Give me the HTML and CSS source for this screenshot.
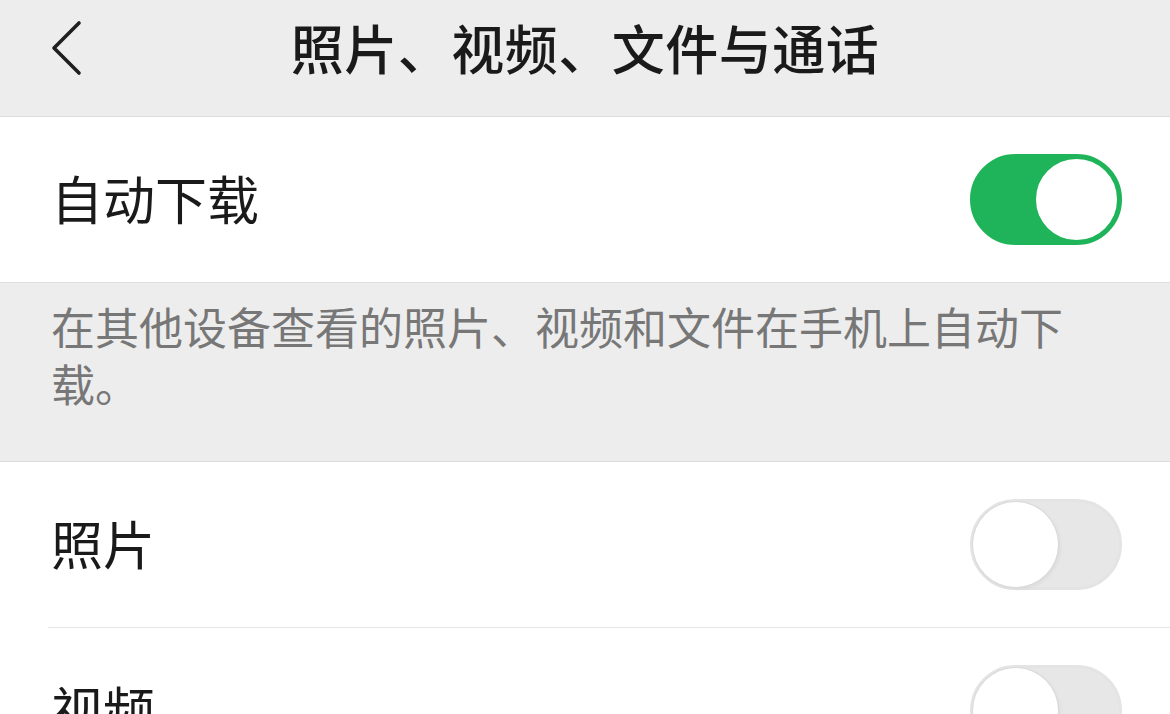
FILE: index.html
```html
<!DOCTYPE html>
<html lang="zh-CN">
<head>
<meta charset="utf-8">
<title>照片、视频、文件与通话</title>
<link rel="stylesheet" href="styles.css">
</head>
<body>
<header class="nav">
  <div class="nav-left">
    <svg class="back" width="34" height="56" viewBox="0 0 34 56" aria-hidden="true">
      <path d="M29 3 L4 28 L29 53" fill="none" stroke="#1f1f1f" stroke-width="3.6" stroke-linecap="round" stroke-linejoin="round"/>
    </svg>
  </div>
  <h1 class="title">照片、视频、文件与通话</h1>
  <div class="nav-right"></div>
</header>

<section class="group">
  <div class="row">
    <span class="label">自动下载</span>
    <span class="switch on"><span class="knob"></span></span>
  </div>
</section>

<p class="desc">在其他设备查看的照片、视频和文件在手机上自动下载。</p>

<section class="group">
  <div class="row">
    <span class="label">照片</span>
    <span class="switch"><span class="knob"></span></span>
  </div>
  <div class="row">
    <span class="label">视频</span>
    <span class="switch"><span class="knob"></span></span>
  </div>
</section>
</body>
</html>
```

FILE: styles.css
```css
html, body {
  margin: 0;
  padding: 0;
}
body {
  background: #ededed;
  font-family: "Noto Sans CJK SC", "Noto Sans", sans-serif;
  color: #1a1a1a;
  overflow: hidden;
}
.nav {
  height: 117px;
  box-sizing: border-box;
  padding-bottom: 21px;
  display: grid;
  grid-template-columns: 1fr auto 1fr;
  align-items: center;
  background: #ededed;
  border-bottom: 1px solid #dcdcdc;
}
.nav-left {
  padding-left: 50px;
  display: flex;
  align-items: center;
}
.back {
  display: block;
}
.title {
  margin: 0;
  font-size: 53px;
  font-weight: 500;
  line-height: 1.2;
  letter-spacing: 0.5px;
  color: #1a1a1a;
}
.group {
  background: #ffffff;
  border-bottom: 1px solid #dedede;
}
.row {
  height: 165px;
  margin-left: 48px;
  padding-left: 3px;
  padding-right: 48px;
  display: flex;
  align-items: center;
  justify-content: space-between;
}
.row + .row {
  border-top: 1px solid #e6e6e6;
}
.label {
  font-size: 52px;
  line-height: 1;
  font-weight: 400;
  color: #1a1a1a;
  padding-bottom: 3px;
}
.switch {
  width: 152px;
  height: 91px;
  box-sizing: border-box;
  border-radius: 46px;
  border: 3px solid #e4e4e4;
  background: #e7e7e7;
  display: flex;
  align-items: center;
  justify-content: flex-start;
}
.knob {
  width: 85px;
  height: 85px;
  box-sizing: border-box;
  border-radius: 50%;
  background: #ffffff;
  box-shadow: 0 0 0 1px #dadada, 2px 2px 4px rgba(0,0,0,0.06);
}
.switch.on {
  background: #1fb45a;
  border-color: #1fb45a;
  justify-content: flex-end;
}
.switch.on .knob {
  box-shadow: none;
  border: 2px solid #1fb45a;
}
.desc {
  margin: 0;
  padding: 15px 70px 49px 51px;
  font-size: 44px;
  line-height: 57px;
  color: #777777;
  background: #ededed;
  border-bottom: 1px solid #dcdcdc;
}
```
